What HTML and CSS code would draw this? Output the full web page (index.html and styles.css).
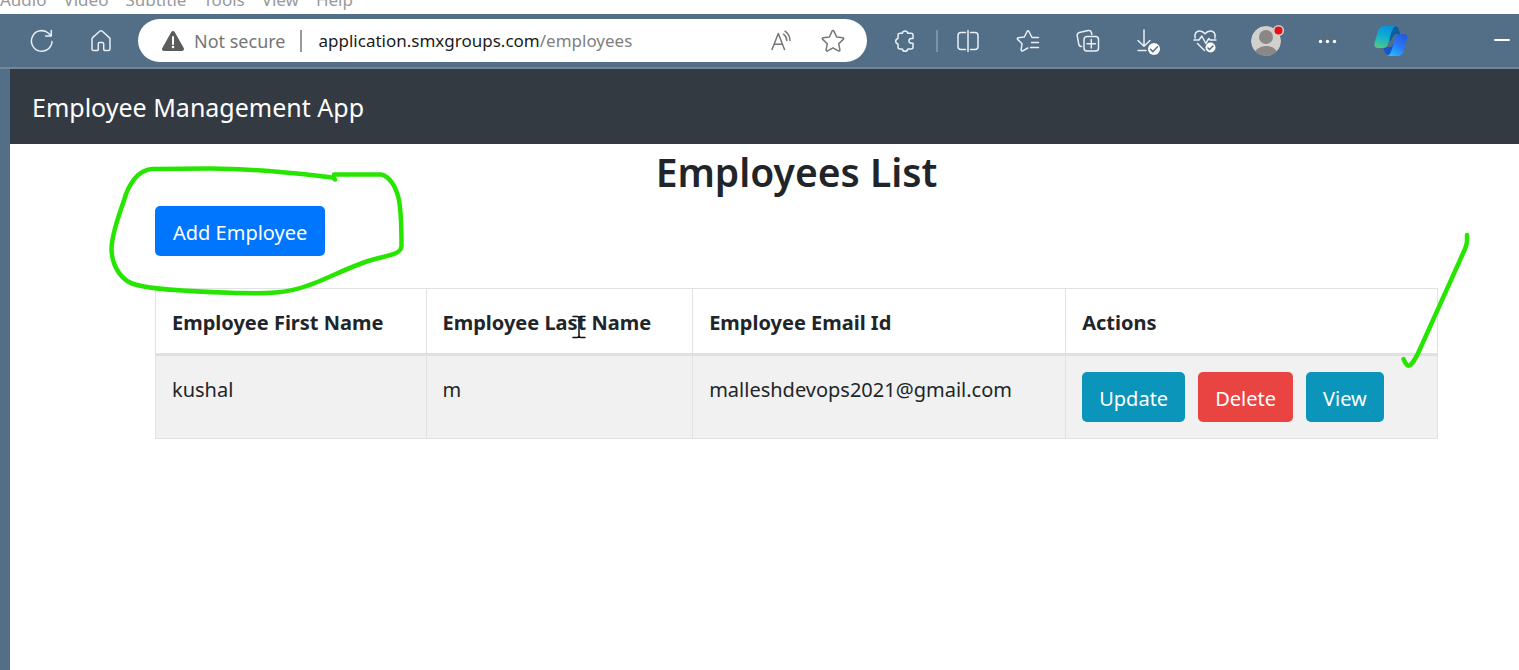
FILE: index.html
```html
<!DOCTYPE html>
<html lang="en">
<head>
<meta charset="utf-8">
<title>Employee Management App</title>
<link rel="stylesheet" href="styles.css">
</head>
<body>
<nav class="player-menu" aria-label="Player menu">
  <span>Audio</span><span>Video</span><span>Subtitle</span><span>Tools</span><span>View</span><span>Help</span>
</nav>

<div class="toolbar">
  <div class="nav-buttons">
    <button class="tool" aria-label="Refresh"><svg width="24" height="24" viewBox="0 0 24 24"><path d="M22 12.500A10.300 10.300 0 1 1 18.500 4.200L21 6.800M21.300 1.500V7H15.600"/></svg></button>
    <button class="tool" aria-label="Home"><svg width="24" height="24" viewBox="0 0 24 24"><path d="M3 10.300c0-.8.300-1.400.9-1.900L10.700 2.300a2 2 0 0 1 2.600 0l6.800 6.100c.6.500.9 1.100.9 1.900V20a1.600 1.600 0 0 1-1.600 1.600h-3.200A1.500 1.500 0 0 1 14.700 20v-5.200a1.200 1.200 0 0 0-1.200-1.200h-3a1.200 1.200 0 0 0-1.200 1.200V20a1.500 1.500 0 0 1-1.500 1.600H4.600A1.600 1.600 0 0 1 3 20z"/></svg></button>
  </div>
  <div class="address">
    <svg class="warning" width="24" height="22" viewBox="0 0 24 22"><path d="M10.300 2a2 2 0 0 1 3.400 0l9 16a2 2 0 0 1-1.700 3H3a2 2 0 0 1-1.700-3z" fill="#5c5c5c"/><path d="M12 7v7" stroke="#fff" stroke-width="2"/><circle cx="12" cy="17" r="1.300" fill="#fff"/></svg>
    <span class="not-secure">Not secure</span>
    <span class="address-divider"></span>
    <div class="url" role="textbox" contenteditable="true" spellcheck="false" aria-label="Address">application.smxgroups.com<span class="url-path">/employees</span></div>
    <button class="address-button" aria-label="Read aloud"><svg width="24" height="24" viewBox="0 0 24 24"><path d="M3 20.500 9.300 4.500l6.200 16M5.200 15.300h8.200M14.500 5.200a8 8 0 0 1 3.300 6.300M16 2.200a12 12 0 0 1 5 9.300"/></svg></button>
    <button class="address-button" aria-label="Add to favorites"><svg width="24" height="24" viewBox="0 0 24 24"><path d="M10.900 2.400Q12 .5 13.100 2.400L15.600 8l6.200.7q1.600.4.500 1.700l-4.600 4.300 1.200 6.100q.1 1.500-1.500 1.100L12 18.800l-5.400 3.100q-1.600.4-1.500-1.100l1.200-6.100-4.600-4.300q-1.100-1.300.5-1.700L8.400 8z"/></svg></button>
  </div>
  <div class="actions-bar">
    <button class="tool" aria-label="Extensions"><svg width="28" height="24" viewBox="0 0 28 24"><path d="M8 4.300h2.300a2.800 2.800 0 0 1 5.500 0H19a2 2 0 0 1 2 2v3.200h-1.700a2.300 2.300 0 0 0 0 4.700H21V18a2 2 0 0 1-2 2h-3.200a2.800 2.800 0 0 1-5.500 0H8a2 2 0 0 1-2-2v-3a2.800 2.800 0 0 1 0-5.500V6.300a2 2 0 0 1 2-2z"/></svg></button>
    <span class="tool-divider"></span>
    <button class="tool" aria-label="Split screen"><svg width="24" height="24" viewBox="0 0 24 24"><path d="M9.500 3.500H5a3 3 0 0 0-3 3v11a3 3 0 0 0 3 3h4.500M14.500 3.500H19a3 3 0 0 1 3 3v11a3 3 0 0 1-3 3h-4.500M12 1.500v21"/></svg></button>
    <button class="tool" aria-label="Favorites"><svg width="24" height="24" viewBox="0 0 24 24"><path d="M22.500 8.500H16L12.900 2.500Q12 1 11.100 2.500L8.300 8l-6 .8q-1.700.4-.6 1.700l4.400 4.200-1 6q.1 1.800 1.700 1.100l5-2.800M15.500 13.500h7M14.500 18.500h8"/></svg></button>
    <button class="tool" aria-label="Collections"><svg width="24" height="24" viewBox="0 0 24 24"><path d="M5.500 17.500c-1.500 0-2.300-.7-2.700-2.300L1.200 6.800C.9 5 1.700 4 3.300 3.600l8.800-2.100c1.700-.3 2.800.4 3.200 1.800l.5 2M11 7.500h8.500a3 3 0 0 1 3 3V19a3 3 0 0 1-3 3H11a3 3 0 0 1-3-3v-8.500a3 3 0 0 1 3-3zM15.300 10.500v8.500M11 14.800h8.500"/></svg></button>
    <button class="tool" aria-label="Downloads"><svg width="24" height="28" viewBox="0 0 24 28"><path d="M8 3v16M2 13.500l6 5.800 6-5.800M2 23.500h8"/><circle class="solid" cx="18" cy="22" r="6"/><path class="tick" d="m14.500 22.300 2.300 2.400 4.700-5"/></svg></button>
    <button class="tool" aria-label="Browser essentials"><svg width="30" height="26" viewBox="0 0 30 26"><path d="M2.200 10C1 5.500 3.500 3 6.700 3 9 3 10.500 4 12 5.800 13.500 4 15 3 17.300 3c3.300 0 5.700 2.500 4.600 7M1 12h5l2.800-4 4 7.500 3-5 1.400 1.500H23M4.500 15.500l7 7"/><circle class="solid" cx="17.500" cy="19.500" r="5"/><path class="tick" d="m15 20 1.500 1.600 3.500-3.600"/></svg></button>
    <button class="tool" aria-label="Profile"><svg width="34" height="36" viewBox="0 0 34 36"><defs><clipPath id="face"><circle cx="15" cy="18" r="15"/></clipPath></defs><g stroke="none" clip-path="url(#face)"><circle cx="15" cy="18" r="15" fill="#d2d0ce"/><circle cx="15" cy="14" r="7" fill="#8a8886"/><ellipse cx="15" cy="32" rx="12" ry="9" fill="#8a8886"/></g><circle cx="27.500" cy="7.500" r="4.800" fill="#e81010" stroke="#d9cfd2"/></svg></button>
    <button class="tool" aria-label="More"><svg width="24" height="24" viewBox="0 0 24 24"><g class="solid"><circle cx="4.500" cy="12.500" r="1.700"/><circle cx="11.500" cy="12.500" r="1.700"/><circle cx="18.500" cy="12.500" r="1.700"/></g></svg></button>
    <button class="tool copilot" aria-label="Copilot"><svg width="34" height="32" viewBox="0 0 34 32"><defs><linearGradient id="left" x1=".6" y1="0" x2=".3" y2="1"><stop offset="0" stop-color="#0893dc"/><stop offset=".5" stop-color="#10aed0"/><stop offset="1" stop-color="#55c985"/></linearGradient><linearGradient id="right" x1=".8" y1="0" x2=".2" y2="1"><stop offset="0" stop-color="#2458dc"/><stop offset=".5" stop-color="#2878f8"/><stop offset="1" stop-color="#25bdfc"/></linearGradient></defs><g stroke="none"><path d="M9 22h8l4-6 1 10-5 4h-2c-3 0-4-2-6-8z" fill="#1557c8"/><path d="M13 1h7c3 0 4 1 4.800 4l1.400 4H23c-3 0-4.500 3-6.500 8z" fill="#07609c"/><path d="M11 1h10c-2 2-3 4-4 7l-3 11c-1 3-2 4-5 4H5c-4 0-5-2-4.500-5L4 6c1-3 3-5 7-5z" fill="url(#left)"/><path d="M23 31H13c3-1 4-4 5-7l3-11c1-3 2-4 5-4h3c4 0 5 2 4 5l-3 11c-1 4-3 6-7 6z" fill="url(#right)"/></g></svg></button>
    <button class="tool minimize" aria-label="Minimize"><svg width="16" height="16" viewBox="0 0 16 16"><path d="M1 7h14" stroke-width="2"/></svg></button>
  </div>
</div>

<div class="viewport">
  <header class="app-header"><a class="brand" href="#">Employee Management App</a></header>
  <main class="content">
    <h1 class="title">Employees List</h1>
    <div class="add-row">
      <button class="btn btn-primary">Add Employee</button>
      <svg class="loop" width="300" height="136" viewBox="105 162 300 136"><path d="M335 179.500C333 176 326 177.500 320 176 275 171 240 168.500 210 168.500L152 169C138 170 130 184 126 194 121 211 112 230 111.500 249 112 267 122 282 137 285 158 291 210 292 240 293 265 293.500 285 294 308 285.500 325 280 342 270 368 261 388 255 401 255 401.500 246 401.500 230 401 212 399 200 396 186 389 176 381 174.500H334"/></svg>
    </div>
    <div class="table-wrap">
      <table class="employees">
        <colgroup><col class="col-first"><col class="col-last"><col class="col-email"><col></colgroup>
        <thead><tr><th>Employee First Name</th><th>Employee Last Name</th><th>Employee Email Id</th><th>Actions</th></tr></thead>
        <tbody><tr><td>kushal</td><td>m</td><td>malleshdevops2021@gmail.com</td>
          <td class="actions-cell"><div class="row-actions"><button class="btn btn-info">Update</button><button class="btn btn-danger">Delete</button><button class="btn btn-info">View</button></div></td></tr></tbody>
      </table>
      <svg class="caret" width="14" height="24" viewBox="0 0 14 24"><path d="M1 1.500h4q2 0 2 2 0-2 2-2h4M7 3v18M1 22.500h4q2 0 2-2 0 2 2 2h4"/></svg>
      <svg class="check" width="74" height="142" viewBox="1398 230 74 142"><path d="M1467 235V241Q1467 244 1465 249L1420 349Q1411 369 1407 365 1405 363 1403.500 359"/></svg>
    </div>
  </main>
</div>
</body>
</html>
```
FILE: styles.css
```css
* { box-sizing: border-box; }
body {
  margin: 0;
  min-height: 100vh;
  display: flex;
  flex-direction: column;
  overflow: hidden;
  background: #536e87;
  color: #212529;
  font-family: "Noto Sans", "Open Sans", sans-serif;
  font-size: 20px;
  line-height: 32px;
}
button { font: inherit; border: 0; padding: 0; background: none; color: inherit; }
svg { display: block; fill: none; stroke: currentColor; stroke-width: 1.5; stroke-linecap: round; stroke-linejoin: round; }

.player-menu {
  display: flex;
  align-items: flex-end;
  gap: 17px;
  height: 14px;
  overflow: hidden;
  background: #fff;
  color: #999;
  font-size: 17px;
  line-height: 28px;
}

.toolbar {
  display: flex;
  align-items: center;
  height: 55px;
  border-bottom: 2px solid #71869a;
  color: #e9eff5;
}
.nav-buttons { display: flex; padding: 0 8px 0 12px; }
.tool { display: flex; align-items: center; justify-content: center; width: 60px; height: 44px; }
.nav-buttons .tool { width: 59px; }
.solid { fill: #fff; stroke: none; }
.tick { stroke: #536e87; }
.address {
  flex: 1;
  display: flex;
  align-items: center;
  height: 43px;
  padding: 0 22px 0 23px;
  border-radius: 22px;
  background: #fff;
  color: #767676;
  font-size: 18px;
}
.warning { stroke: none; margin-right: 9px; }
.address-divider { width: 2px; height: 22px; margin: 0 17px 0 14px; background: #999; }
.url { flex: 1; color: #1b1b1b; outline: 0; white-space: nowrap; font-size: 17px; }
.url-path { color: #808080; }
.address-button { margin-left: 28px; }
.actions-bar { display: flex; align-items: center; padding-left: 9px; }
.tool-divider { width: 2px; height: 22px; background: #7d92a6; }
.copilot { width: 66px; }
.minimize { width: 34px; margin-left: 61px; color: #fff; }

.viewport { flex: 1; margin-left: 10px; background: #fff; }
.app-header { display: flex; align-items: center; height: 75px; padding: 0 22px; background: #343a42; }
.brand { color: #fff; font-size: 25px; line-height: 40px; text-decoration: none; }
.content { padding: 0 81px 0 145px; }
.title { margin: 0 0 6px; font-size: 39px; line-height: 56px; font-weight: 600; text-align: center; }
.btn { height: 50px; padding: 3px 17px 0; border-radius: 5px; color: #fff; white-space: nowrap; }
.btn-primary { padding: 3px 18px 0; background: #0076ff; }
.btn-info { background: #0b95bb; }
.btn-danger { background: #e94442; }
.add-row { position: relative; z-index: 1; display: flex; margin-bottom: 32px; }

.table-wrap { position: relative; }
.employees { width: 100%; table-layout: fixed; border-collapse: collapse; }
.col-first { width: 21.1%; }
.col-last { width: 20.8%; }
.col-email { width: 29.1%; }
.employees th, .employees td { padding: 18px 16px 14px; border: 1px solid #e0e2e4; text-align: left; vertical-align: top; white-space: nowrap; }
.employees th { border-bottom: 3px solid #dee0e2; }
.employees .actions-cell { padding: 16px; }
.employees tbody tr { background: #f1f1f1; }
.row-actions { display: flex; gap: 13px; }

.loop, .check { position: absolute; color: #26e600; stroke-width: 4.5; pointer-events: none; }
.loop { left: -50px; top: -44px; }
.check { right: -34px; top: -58px; }
.caret { position: absolute; left: 417px; top: 27px; color: #111; }
```
